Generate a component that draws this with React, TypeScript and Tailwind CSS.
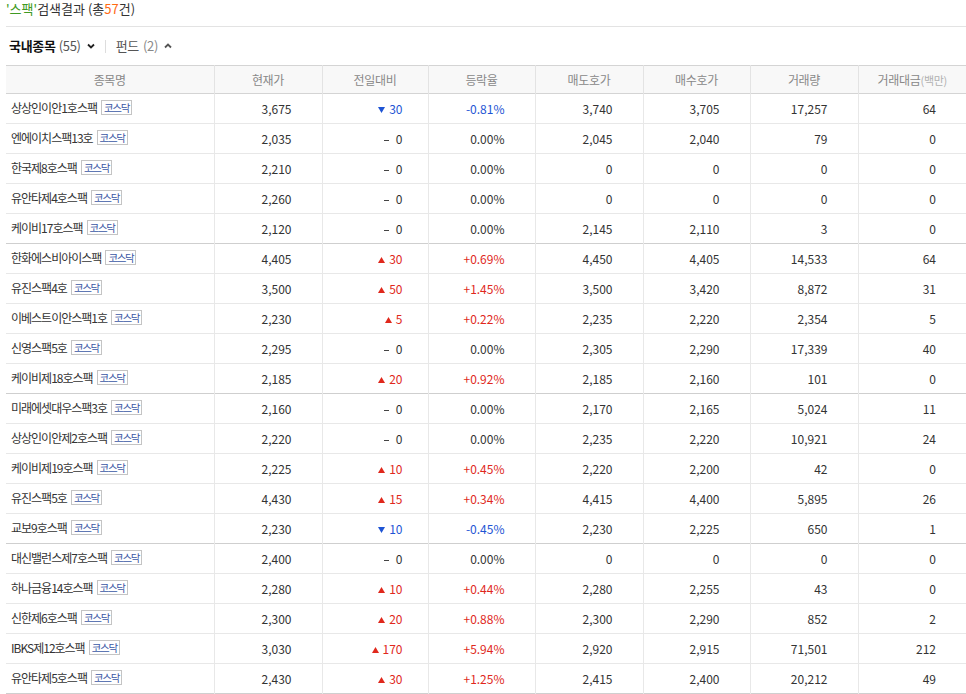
import React from "react";

type Row = {
  name: string;
  price: string;
  dir: "up" | "down" | "flat";
  diff: string;
  rate: string;
  ask: string;
  bid: string;
  volume: string;
  amount: string;
};

const rows: Row[] = [
  { name: "상상인이안1호스팩", price: "3,675", dir: "down", diff: "30", rate: "-0.81%", ask: "3,740", bid: "3,705", volume: "17,257", amount: "64" },
  { name: "엔에이치스팩13호", price: "2,035", dir: "flat", diff: "0", rate: "0.00%", ask: "2,045", bid: "2,040", volume: "79", amount: "0" },
  { name: "한국제8호스팩", price: "2,210", dir: "flat", diff: "0", rate: "0.00%", ask: "0", bid: "0", volume: "0", amount: "0" },
  { name: "유안타제4호스팩", price: "2,260", dir: "flat", diff: "0", rate: "0.00%", ask: "0", bid: "0", volume: "0", amount: "0" },
  { name: "케이비17호스팩", price: "2,120", dir: "flat", diff: "0", rate: "0.00%", ask: "2,145", bid: "2,110", volume: "3", amount: "0" },
  { name: "한화에스비아이스팩", price: "4,405", dir: "up", diff: "30", rate: "+0.69%", ask: "4,450", bid: "4,405", volume: "14,533", amount: "64" },
  { name: "유진스팩4호", price: "3,500", dir: "up", diff: "50", rate: "+1.45%", ask: "3,500", bid: "3,420", volume: "8,872", amount: "31" },
  { name: "이베스트이안스팩1호", price: "2,230", dir: "up", diff: "5", rate: "+0.22%", ask: "2,235", bid: "2,220", volume: "2,354", amount: "5" },
  { name: "신영스팩5호", price: "2,295", dir: "flat", diff: "0", rate: "0.00%", ask: "2,305", bid: "2,290", volume: "17,339", amount: "40" },
  { name: "케이비제18호스팩", price: "2,185", dir: "up", diff: "20", rate: "+0.92%", ask: "2,185", bid: "2,160", volume: "101", amount: "0" },
  { name: "미래에셋대우스팩3호", price: "2,160", dir: "flat", diff: "0", rate: "0.00%", ask: "2,170", bid: "2,165", volume: "5,024", amount: "11" },
  { name: "상상인이안제2호스팩", price: "2,220", dir: "flat", diff: "0", rate: "0.00%", ask: "2,235", bid: "2,220", volume: "10,921", amount: "24" },
  { name: "케이비제19호스팩", price: "2,225", dir: "up", diff: "10", rate: "+0.45%", ask: "2,220", bid: "2,200", volume: "42", amount: "0" },
  { name: "유진스팩5호", price: "4,430", dir: "up", diff: "15", rate: "+0.34%", ask: "4,415", bid: "4,400", volume: "5,895", amount: "26" },
  { name: "교보9호스팩", price: "2,230", dir: "down", diff: "10", rate: "-0.45%", ask: "2,230", bid: "2,225", volume: "650", amount: "1" },
  { name: "대신밸런스제7호스팩", price: "2,400", dir: "flat", diff: "0", rate: "0.00%", ask: "0", bid: "0", volume: "0", amount: "0" },
  { name: "하나금융14호스팩", price: "2,280", dir: "up", diff: "10", rate: "+0.44%", ask: "2,280", bid: "2,255", volume: "43", amount: "0" },
  { name: "신한제6호스팩", price: "2,300", dir: "up", diff: "20", rate: "+0.88%", ask: "2,300", bid: "2,290", volume: "852", amount: "2" },
  { name: "IBKS제12호스팩", price: "3,030", dir: "up", diff: "170", rate: "+5.94%", ask: "2,920", bid: "2,915", volume: "71,501", amount: "212" },
  { name: "유안타제5호스팩", price: "2,430", dir: "up", diff: "30", rate: "+1.25%", ask: "2,415", bid: "2,400", volume: "20,212", amount: "49" },
];

const headers = ["종목명", "현재가", "전일대비", "등락율", "매도호가", "매수호가", "거래량"];

function Chevron({ up }: { up?: boolean }) {
  return (
    <svg width="8" height="6" viewBox="0 0 8 6" className="ml-[6px]">
      <path
        d={up ? "M1 4.5 L4 1.5 L7 4.5" : "M1 1.5 L4 4.5 L7 1.5"}
        fill="none"
        stroke={up ? "#555" : "#222"}
        strokeWidth="1.8"
      />
    </svg>
  );
}

function Diff({ dir, value }: { dir: Row["dir"]; value: string }) {
  if (dir === "flat") {
    return (
      <span className="text-[#333]">
        <span className="inline-block align-middle w-[5px] h-px bg-[#444] mr-[7px]" />
        {value}
      </span>
    );
  }
  const up = dir === "up";
  const color = up ? "#e0281c" : "#1e54d4";
  return (
    <span className={up ? "text-[#e0281c]" : "text-[#1e54d4]"}>
      <svg width="7" height="6" viewBox="0 0 7 6" className="inline-block align-middle mr-[4px] -mt-[1px]">
        <path d={up ? "M3.5 0 L7 6 L0 6 Z" : "M0 0 L7 0 L3.5 6 Z"} fill={color} />
      </svg>
      {value}
    </span>
  );
}

export default function App() {
  return (
    <div
      className="w-[966px] h-[694px] overflow-hidden bg-white text-[#333]"
      style={{ fontFamily: '"Noto Sans CJK KR", "Noto Sans", sans-serif' }}
    >
      <div className="ml-[6px] h-[27px] border-b border-[#e3e3e3]">
        <p className="text-[13px] leading-[17px]">
          <span className="text-[#3f9a23]">'스팩'</span>검색결과 (총<span className="text-[#ff6a13]">57</span>건)
        </p>
      </div>
      <div className="ml-[6px]">
        <div className="flex items-center h-[38px] pl-[3px] text-[13px] tracking-[-0.3px]">
          <span className="font-bold text-[#111]">국내종목</span>
          <span className="ml-[3px] text-[#555]">(55)</span>
          <Chevron />
          <span className="mx-[10px] w-px h-[13px] bg-[#ddd]" />
          <span className="text-[#555]">펀드</span>
          <span className="ml-[4px] text-[#888]">(2)</span>
          <Chevron up />
        </div>
        <table className="table-fixed border-collapse w-[960px] text-[12px]">
          <colgroup>
            <col className="w-[208px]" />
            <col className="w-[108px]" />
            <col className="w-[106px]" />
            <col className="w-[107px]" />
            <col className="w-[108px]" />
            <col className="w-[107px]" />
            <col className="w-[108px]" />
            <col className="w-[108px]" />
          </colgroup>
          <thead>
            <tr className="h-[28px] bg-[#f8f8f8] border-t border-b border-[#d4d4d4]">
              {headers.map((h, i) => (
                <th
                  key={h}
                  className={`font-normal text-[#888] text-center tracking-[-0.3px] ${i > 0 ? "border-l border-[#e3e3e3]" : ""}`}
                >
                  {h}
                </th>
              ))}
              <th className="font-normal text-[#888] text-center tracking-[-0.3px] border-l border-[#e3e3e3]">
                거래대금<span className="text-[11px] text-[#b0b0b0]">(백만)</span>
              </th>
            </tr>
          </thead>
          <tbody>
            {rows.map((r, i) => (
              <tr
                key={i}
                className={`h-[30px] border-b ${(i + 1) % 5 === 0 ? "border-[#cfcfcf]" : "border-[#e8e8e8]"}`}
              >
                <td className="pl-[5px] text-left tracking-[-1px] text-[#333]">
                  {r.name}
                  <span className="relative -top-[3px] inline-block align-middle ml-[4px] border border-[#c4c4c4] px-[2px] leading-[13px] text-[10.5px] tracking-[-1.3px] text-[#3b58a5]">
                    코스닥
                  </span>
                </td>
                <td className="text-right pr-[30px] border-l border-[#e8e8e8]">{r.price}</td>
                <td className="text-right pr-[25px] border-l border-[#e8e8e8]">
                  <Diff dir={r.dir} value={r.diff} />
                </td>
                <td
                  className={`text-right pr-[30px] border-l border-[#e8e8e8] ${
                    r.dir === "up" ? "text-[#e0281c]" : r.dir === "down" ? "text-[#1e54d4]" : ""
                  }`}
                >
                  {r.rate}
                </td>
                <td className="text-right pr-[30px] border-l border-[#e8e8e8]">{r.ask}</td>
                <td className="text-right pr-[30px] border-l border-[#e8e8e8]">{r.bid}</td>
                <td className="text-right pr-[30px] border-l border-[#e8e8e8]">{r.volume}</td>
                <td className="text-right pr-[30px] border-l border-[#e8e8e8]">{r.amount}</td>
              </tr>
            ))}
          </tbody>
        </table>
      </div>
    </div>
  );
}
